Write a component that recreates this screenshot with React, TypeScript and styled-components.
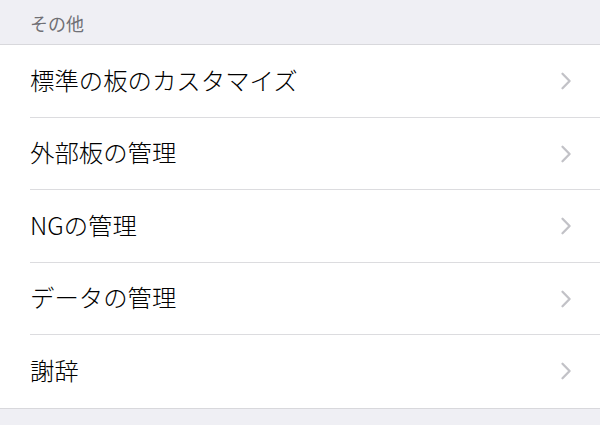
import React from 'react'
import styled, { createGlobalStyle } from 'styled-components'

const GlobalStyle = createGlobalStyle`
  html, body {
    margin: 0;
    padding: 0;
    background: #efeff4;
    font-family: "Noto Sans CJK JP", "Noto Sans", sans-serif;
  }
`

const Page = styled.div`
  width: 600px;
  height: 425px;
  background: #efeff4;
  overflow: hidden;
`

const SectionHeader = styled.div`
  height: 45px;
  box-sizing: border-box;
  padding: 12px 30px 0;
  font-size: 18px;
  line-height: 22px;
  font-weight: 400;
  color: #707075;
  border-bottom: 1px solid #d8d8dc;
`

const List = styled.ul`
  list-style: none;
  margin: 0;
  padding: 0;
  background: #ffffff;
  border-bottom: 1px solid #d8d8dc;
`

const Row = styled.li`
  position: relative;
  height: 72.5px;
  display: flex;
  align-items: center;
  justify-content: space-between;
  padding: 0 28px 0 30px;
  box-sizing: border-box;

  &:not(:last-child)::after {
    content: '';
    position: absolute;
    left: 30px;
    right: 0;
    bottom: 0;
    height: 1px;
    background: #dcdcdf;
  }
`

const Label = styled.span`
  font-size: 24.4px;
  line-height: 30px;
  font-weight: 300;
  color: #000000;
  margin-top: -3px;
`

const Chevron = () => (
  <svg width="12" height="18" viewBox="0 0 12 18" aria-hidden="true">
    <path
      d="M2.5 1.8 L9.6 9 L2.5 16.2"
      fill="none"
      stroke="#c2c2c7"
      strokeWidth="2.3"
      strokeLinecap="round"
      strokeLinejoin="round"
    />
  </svg>
)

const items = [
  '標準の板のカスタマイズ',
  '外部板の管理',
  'NGの管理',
  'データの管理',
  '謝辞',
]

export default function App() {
  return (
    <Page>
      <GlobalStyle />
      <SectionHeader>その他</SectionHeader>
      <List>
        {items.map((item) => (
          <Row key={item}>
            <Label>{item}</Label>
            <Chevron />
          </Row>
        ))}
      </List>
    </Page>
  )
}
